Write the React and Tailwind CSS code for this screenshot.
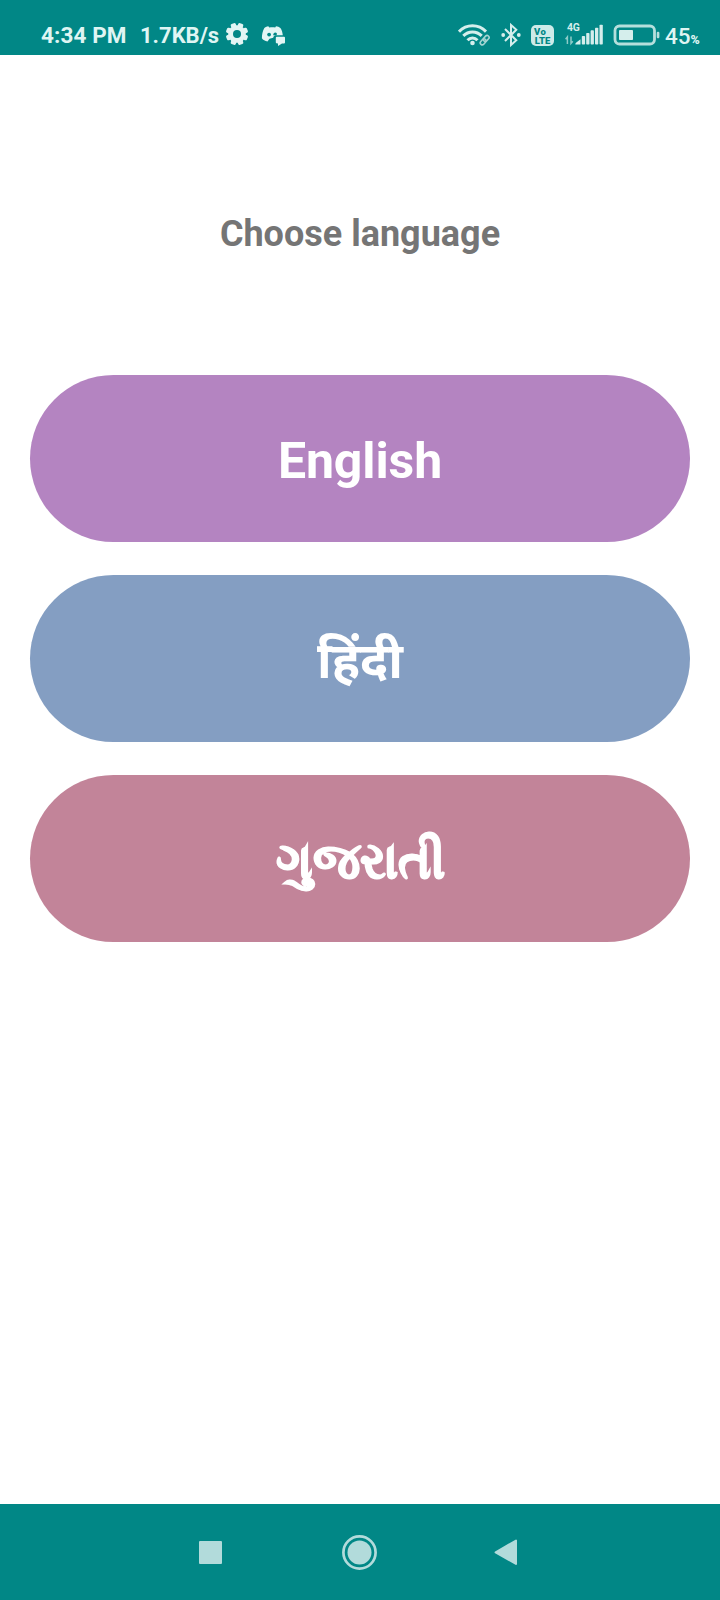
import React from "react";

const ICE = "#d5eeec";

function GearIcon() {
  return (
    <svg className="block h-[24px] w-[24px]" viewBox="-12 -12 24 24" fill="#e3f5f4">
      <mask id="hub" maskUnits="userSpaceOnUse" x="-12" y="-12" width="24" height="24">
        <rect x="-12" y="-12" width="24" height="24" fill="#fff" />
        <circle r="4" fill="#000" />
      </mask>
      <g mask="url(#hub)">
        {[0, 45, 90, 135].map((a) => (
          <rect key={a} x="-2.7" y="-11.2" width="5.4" height="22.4" rx="1.5" transform={`rotate(${a + 22.5})`} />
        ))}
        <circle r="8.8" />
      </g>
    </svg>
  );
}

function GameChatIcon() {
  return (
    <svg className="block h-[24px] w-[26px]" viewBox="0 0 26 24" fill="#e3f5f4">
      <path d="M7.3 3.2 C5.6 3.4 4 4.2 3.2 5.2 C1.6 8.3 .9 11.5 .9 15.2 C2 16.8 4 18.1 6.5 18.5 L8.5 15.8 L12.2 14.8 C12.4 13.3 13.6 12.2 15 12.2 H21.8 C21.5 9.5 20.8 7 19.4 5 C18.2 4 16.7 3.4 15 3.2 L14.2 4.6 C12.4 4.2 10.4 4.2 8.3 4.6 Z" />
      <path d="M15.8 13.8 H23 Q24 13.8 24 14.8 V19.5 Q24 20.5 23 20.5 H21 L17 23 V20.5 Q14.8 20.5 14.8 19.5 V14.8 Q14.8 13.8 15.8 13.8Z" />
      <circle cx="8.1" cy="11.6" r="1.9" fill="#018786" />
      <path d="M12.2 12.2 Q12.3 9.4 14.4 9.4 Q16 9.6 16 11.2 L15 12.4 Z" fill="#018786" />
    </svg>
  );
}

function WifiIcon() {
  return (
    <svg className="block h-[24px] w-[33px]" viewBox="0 0 33 24" fill="none" stroke={ICE} strokeWidth="3">
      <path d="M1 8.6 C8.5 .9 20.5 .9 28 8.6" />
      <path d="M5.3 12.9 C10.5 7.6 18.5 7.6 23.7 12.9" />
      <path d="M9.5 17.2 C12.4 14.2 16.6 14.2 19.5 17.2" />
      <circle cx="14.5" cy="20" r="2.3" fill={ICE} stroke="none" />
      <g stroke="#a4d5d2" strokeWidth="1.6" transform="rotate(-48 26.8 17)">
        <rect x="21" y="15" width="6.6" height="4" rx="2" />
        <rect x="25.6" y="15" width="6.6" height="4" rx="2" />
      </g>
    </svg>
  );
}

function BluetoothIcon() {
  return (
    <svg className="block h-[26px] w-[20px]" viewBox="0 0 20 26" fill="none" stroke={ICE} strokeWidth="2">
      <path d="M4 7 L15.3 18.3 L10 23 V3 L15.3 7.7 L4 19" />
      <circle cx="2.2" cy="13" r="1.9" fill={ICE} stroke="none" />
      <circle cx="17.8" cy="13" r="1.9" fill={ICE} stroke="none" />
    </svg>
  );
}

function VolteIcon() {
  return (
    <span className="flex h-[21px] w-[23px] flex-col items-center justify-center rounded-[5px] bg-[#cdebe9] text-[9.5px] leading-[9px] font-black text-[#018786]">
      <span className="w-[17px] text-left tracking-[0.4px]">Vo</span>
      <span>LTE</span>
    </span>
  );
}

function SignalIcon() {
  return (
    <svg className="block h-[26px] w-[40px]" viewBox="0 0 40 26" fill={ICE}>
      <text x="1.9" y="9.6" fontFamily="Roboto, sans-serif" fontWeight="700" fontSize="10.4">4G</text>
      <path d="M2.4 23 V16 L.6 18.3 M6 15.4 V22.4 L7.8 20.2" fill="none" stroke="#8ecbc8" strokeWidth="1.5" />
      <path d="M10.3 23.5 Q10.3 22.5 11 21.8 L15.5 18.2 V23.5Z" />
      <rect x="16.8" y="15" width="3.3" height="8.5" rx=".8" />
      <rect x="21.2" y="12" width="3.3" height="11.5" rx=".8" />
      <rect x="25.6" y="9.2" width="3.3" height="14.3" rx=".8" />
      <rect x="30" y="6.7" width="3.3" height="16.8" rx=".8" />
      <rect x="34.5" y="3.8" width="3.3" height="19.7" rx=".8" />
    </svg>
  );
}

function BatteryIcon() {
  return (
    <svg className="block h-[22px] w-[48px]" viewBox="0 0 48 22">
      <rect x="2" y="2" width="39.5" height="18" rx="4.5" fill="none" stroke="#b5dfdc" strokeWidth="2.8" />
      <rect x="6" y="6" width="14" height="10" rx=".8" fill="#d5eeec" />
      <rect x="43.7" y="7.8" width="2.7" height="6.4" rx="1.2" fill="#b5dfdc" />
    </svg>
  );
}

function StatusBar() {
  return (
    <header className="flex h-[55px] items-start bg-[#018786] text-[#dff5f3]">
      <span className="mt-[21px] ml-[41px] w-[99px] text-[22.5px] leading-[28px] font-bold tracking-[0.1px] whitespace-nowrap">4:34 PM</span>
      <span className="mt-[22px] w-[85px] text-[22px] leading-[28px] font-bold whitespace-nowrap">1.7KB/s</span>
      <div className="mt-[22px]"><GearIcon /></div>
      <div className="mt-[23px] ml-[12px]"><GameChatIcon /></div>
      <div className="mt-[23px] ml-[171px]"><WifiIcon /></div>
      <div className="mt-[22px] ml-[10px]"><BluetoothIcon /></div>
      <div className="mt-[25px] ml-[10px]"><VolteIcon /></div>
      <div className="mt-[21px] ml-[10.5px]"><SignalIcon /></div>
      <div className="mt-[24px] ml-[8.5px]"><BatteryIcon /></div>
      <span className="mt-[22px] ml-[4px] flex items-baseline leading-[28px] font-medium whitespace-nowrap">
        <span className="text-[22.5px]">45</span>
        <span className="text-[12.5px] font-black">%</span>
      </span>
    </header>
  );
}

const languages = [
  { label: "English", bg: "bg-[#b484c1]", text: "pt-[5px] text-[50px] tracking-[-0.1px]" },
  { label: "हिंदी", bg: "bg-[#849ec2]", text: "pt-[5px] text-[50px]" },
  { label: "ગુજરાતી", bg: "bg-[#c28499]", text: "pt-[6px] text-[49.5px] [-webkit-text-stroke:1.4px_white]" },
];

export default function App() {
  return (
    <div className="flex h-[1600px] w-[720px] flex-col bg-white font-['Roboto','Noto_Sans',sans-serif]">
      <StatusBar />
      <main className="flex flex-1 flex-col px-[30px] pt-[155px]">
        <h1 className="text-center text-[36px] leading-[48px] font-bold text-[#757575]">Choose language</h1>
        <div className="mt-[117px] flex flex-col gap-[33.5px]">
          {languages.map((l) => (
            <button
              key={l.label}
              className={`flex h-[166.5px] w-full items-center justify-center rounded-full leading-[60px] font-bold text-white ${l.bg} ${l.text}`}
            >
              {l.label}
            </button>
          ))}
        </div>
      </main>
      <nav className="flex h-[96px] items-center bg-[#018786]">
        <span className="ml-[199px] h-[23px] w-[23px] rounded-[1px] bg-[#b2dbdb]" />
        <svg className="ml-[120px] h-[35px] w-[35px]" viewBox="0 0 35 35">
          <circle cx="17.5" cy="17.5" r="16.1" fill="none" stroke="#b2dbdb" strokeWidth="2.7" />
          <circle cx="17.5" cy="17.5" r="12" fill="#b2dbdb" />
        </svg>
        <svg className="ml-[116px] h-[28px] w-[24px]" viewBox="0 0 24 28" fill="#b2dbdb" stroke="#b2dbdb" strokeWidth="2" strokeLinejoin="round">
          <path d="M2.6 14.3 L23 2.5 V26 Z" />
        </svg>
      </nav>
    </div>
  );
}
